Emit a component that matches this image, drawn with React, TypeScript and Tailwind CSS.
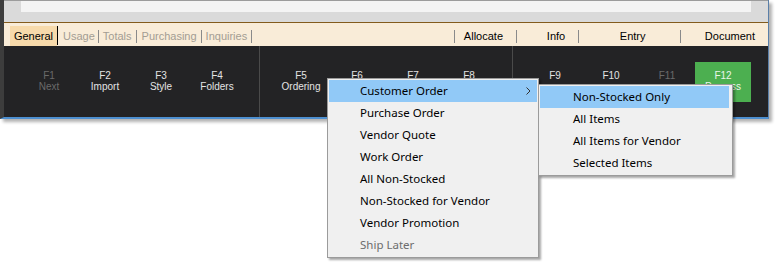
import React from "react";

type FK = { k: string; n: string; dis?: boolean; green?: boolean };

const fkeys1: FK[] = [
  { k: "F1", n: "Next", dis: true },
  { k: "F2", n: "Import" },
  { k: "F3", n: "Style" },
  { k: "F4", n: "Folders" },
];
const fkeys2: FK[] = [
  { k: "F5", n: "Ordering" },
  { k: "F6", n: "" },
  { k: "F7", n: "" },
  { k: "F8", n: "" },
];
const fkeys3: FK[] = [
  { k: "F9", n: "" },
  { k: "F10", n: "" },
  { k: "F11", n: "", dis: true },
  { k: "F12", n: "Process", green: true },
];

function Cell({ f }: { f: FK }) {
  return (
    <div
      className={
        "w-[56px] h-[40px] flex flex-col items-center justify-center leading-[10px] text-[10px] " +
        (f.green ? "bg-[#4caf50] text-[#eaf6ea]" : f.dis ? "text-[#6a6a6a]" : "text-[#e4e4e4]")
      }
    >
      <span>{f.k}</span>
      <span className="mt-[1px] h-[10px]">{f.n}</span>
    </div>
  );
}

const menu1 = [
  "Customer Order",
  "Purchase Order",
  "Vendor Quote",
  "Work Order",
  "All Non-Stocked",
  "Non-Stocked for Vendor",
  "Vendor Promotion",
  "Ship Later",
];
const menu2 = ["Non-Stocked Only", "All Items", "All Items for Vendor", "Selected Items"];

export default function App() {
  return (
    <div
      className="relative w-[776px] h-[266px] bg-white overflow-hidden"
      style={{ fontFamily: '"Liberation Sans", Arial, sans-serif' }}
    >
      {/* window */}
      <div className="w-[769px] border-l-4 border-l-[#3d3d3d] border-r border-r-[#5a7fa8] border-b-2 border-b-[#4d8fd0] shadow-[3px_3px_3px_rgba(0,0,0,0.3)]">
        <div className="h-[22px] bg-[#dadada] border-t border-t-[#9c9c9c]">
          <div className="ml-[17px] w-[730px] h-[11px] bg-[#f4f4f4]" />
        </div>
        <div className="h-px bg-[#835b1c]" />
        <div className="h-[23px] bg-[#f9ecd8] flex items-end text-[11px] relative">
          <div className="ml-[6px] w-[47px] h-[20px] bg-[#f7daab] flex items-center justify-center text-black">
            General
          </div>
          <div className="w-px h-[19px] mb-[1px] bg-black" />
          <div className="flex items-center h-[20px] text-[#a39d93]">
            <span className="pl-[5px] pr-[3px]">Usage</span>
            <span className="w-px h-[13px] bg-[#8a8a8a]" />
            <span className="pl-[4px] pr-[4px]">Totals</span>
            <span className="w-px h-[13px] bg-[#8a8a8a]" />
            <span className="pl-[5px] pr-[4px]">Purchasing</span>
            <span className="w-px h-[13px] bg-[#8a8a8a]" />
            <span className="pl-[4px] pr-[4px]">Inquiries</span>
            <span className="w-px h-[13px] bg-[#8a8a8a]" />
          </div>
          <div className="flex items-center h-[20px] ml-auto mr-[13px] text-black">
            <span className="w-px h-[13px] bg-[#8a8a8a]" />
            <span className="w-[61px] pl-[9px]">Allocate</span>
            <span className="w-px h-[13px] bg-[#8a8a8a]" />
            <span className="w-[61px] pl-[30px]">Info</span>
            <span className="w-px h-[13px] bg-[#8a8a8a]" />
            <span className="w-[101px] pl-[41px]">Entry</span>
            <span className="w-px h-[13px] bg-[#8a8a8a]" />
            <span className="pl-[24px]">Document</span>
          </div>
        </div>
        <div className="h-[71px] bg-[#232325] flex">
          <div className="w-[255px] pl-[17px] flex items-center">
            {fkeys1.map((f) => (
              <Cell key={f.k} f={f} />
            ))}
          </div>
          <div className="w-px bg-[#4a4a4a]" />
          <div className="w-[252px] pl-[13px] flex items-center">
            {fkeys2.map((f) => (
              <Cell key={f.k} f={f} />
            ))}
          </div>
          <div className="w-px bg-[#4a4a4a]" />
          <div className="flex-1 pl-[14px] flex items-center">
            {fkeys3.map((f) => (
              <Cell key={f.k} f={f} />
            ))}
          </div>
        </div>
      </div>

      {/* menu 1 */}
      <div
        className="absolute left-[327px] top-[78px] w-[212px] py-[1px] bg-[#f0f0f0] border border-[#9b9b9b] shadow-[2px_2px_2px_rgba(0,0,0,0.35)] text-[11.5px]"
        style={{ fontFamily: '"Noto Sans", "Open Sans", sans-serif' }}
      >
        {menu1.map((m, i) => (
          <div
            key={m}
            className={
              "relative h-[22px] mx-[1px] flex items-center pl-[31px] " +
              (i === 0 ? "bg-[#91c9f7] text-black" : i === 7 ? "text-[#6d6d6d]" : "text-black")
            }
          >
            {m}
            {i === 0 && (
              <svg className="absolute right-[6px] top-[7px]" width="5" height="8" viewBox="0 0 5 8">
                <path d="M0.5 0.5 L4 4 L0.5 7.5" fill="none" stroke="#333" strokeWidth="1" />
              </svg>
            )}
          </div>
        ))}
      </div>

      {/* menu 2 */}
      <div
        className="absolute left-[538px] top-[84px] w-[195px] py-[1px] bg-[#f0f0f0] border border-[#9b9b9b] shadow-[2px_2px_2px_rgba(0,0,0,0.35)] text-[11.5px]"
        style={{ fontFamily: '"Noto Sans", "Open Sans", sans-serif' }}
      >
        {menu2.map((m, i) => (
          <div
            key={m}
            className={
              "h-[22px] mx-[1px] mr-[3px] flex items-center pl-[33px] text-black " +
              (i === 0 ? "bg-[#91c9f7]" : "")
            }
          >
            {m}
          </div>
        ))}
      </div>
    </div>
  );
}
